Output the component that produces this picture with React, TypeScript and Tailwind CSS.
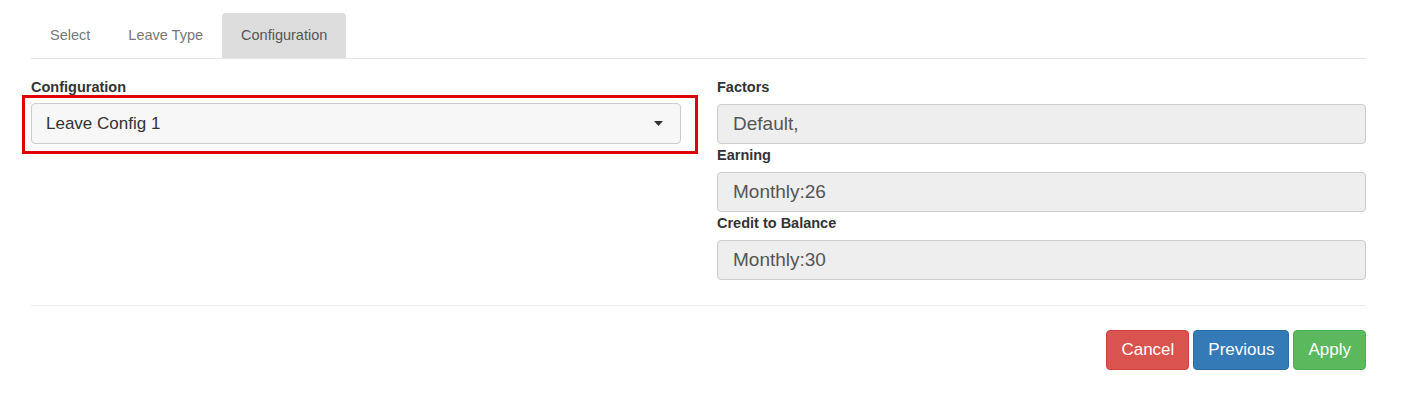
import React from "react";

const font = { fontFamily: '"Liberation Sans", Arial, sans-serif' };

function Field({ label, value }: { label: string; value: string }) {
  return (
    <div className="flex flex-col">
      <label className="text-[14.5px] leading-[20px] font-bold text-[#333] mb-[7px]">{label}</label>
      <div className="h-[40px] rounded-[4px] border border-[#ccc] bg-[#eeeeee] px-[15px] flex items-center text-[19px] text-[#555]">
        {value}
      </div>
    </div>
  );
}

export default function App() {
  return (
    <div className="bg-white w-[1412px] h-[402px]" style={font}>
      <div className="ml-[31px] w-[1335px] pt-[13px]">
        <div className="flex border-b border-[#e5e5e5] h-[46px]">
          <div className="h-[45px] px-[19px] flex items-center text-[14.5px] text-[#777]">Select</div>
          <div className="h-[45px] px-[19px] flex items-center text-[14.5px] text-[#777]">Leave Type</div>
          <div className="h-[45px] px-[19px] flex items-center text-[14.5px] text-[#555] bg-[#dddddd] rounded-t-[4px]">Configuration</div>
        </div>
        <div className="grid grid-cols-[650px_649px] gap-x-[36px] mt-[18px]">
          <div className="flex flex-col">
            <label className="text-[14.5px] leading-[20px] font-bold text-[#333] mb-[6px]">Configuration</label>
            <div className="relative">
              <div className="h-[41px] rounded-[4px] border border-[#ccc] bg-[#f7f7f7] pl-[14px] pr-[16px] flex items-center justify-between text-[17px] text-[#333]">
                <span>Leave Config 1</span>
                <svg width="9" height="5" viewBox="0 0 9 5" className="mr-[1px]">
                  <path d="M0 0 L9 0 L4.5 5 Z" fill="#333" />
                </svg>
              </div>
              <div className="absolute left-[-9px] right-[-17px] top-[-8px] bottom-[-10px] border-[3px] border-[#e00000] pointer-events-none" />
            </div>
          </div>
          <div className="flex flex-col gap-[1px]">
            <Field label="Factors" value="Default," />
            <Field label="Earning" value="Monthly:26" />
            <Field label="Credit to Balance" value="Monthly:30" />
          </div>
        </div>
        <div className="mt-[25px] border-t border-[#eeeeee]" />
        <div className="flex justify-end gap-[4px] mt-[24px]">
          <button className="h-[40px] px-[14px] rounded-[4px] bg-[#d9534f] border border-[#d43f3a] text-white text-[17px]">Cancel</button>
          <button className="h-[40px] px-[14px] rounded-[4px] bg-[#337ab7] border border-[#2e6da4] text-white text-[17px]">Previous</button>
          <button className="h-[40px] px-[14px] rounded-[4px] bg-[#5cb85c] border border-[#4cae4c] text-white text-[17px]">Apply</button>
        </div>
      </div>
    </div>
  );
}
